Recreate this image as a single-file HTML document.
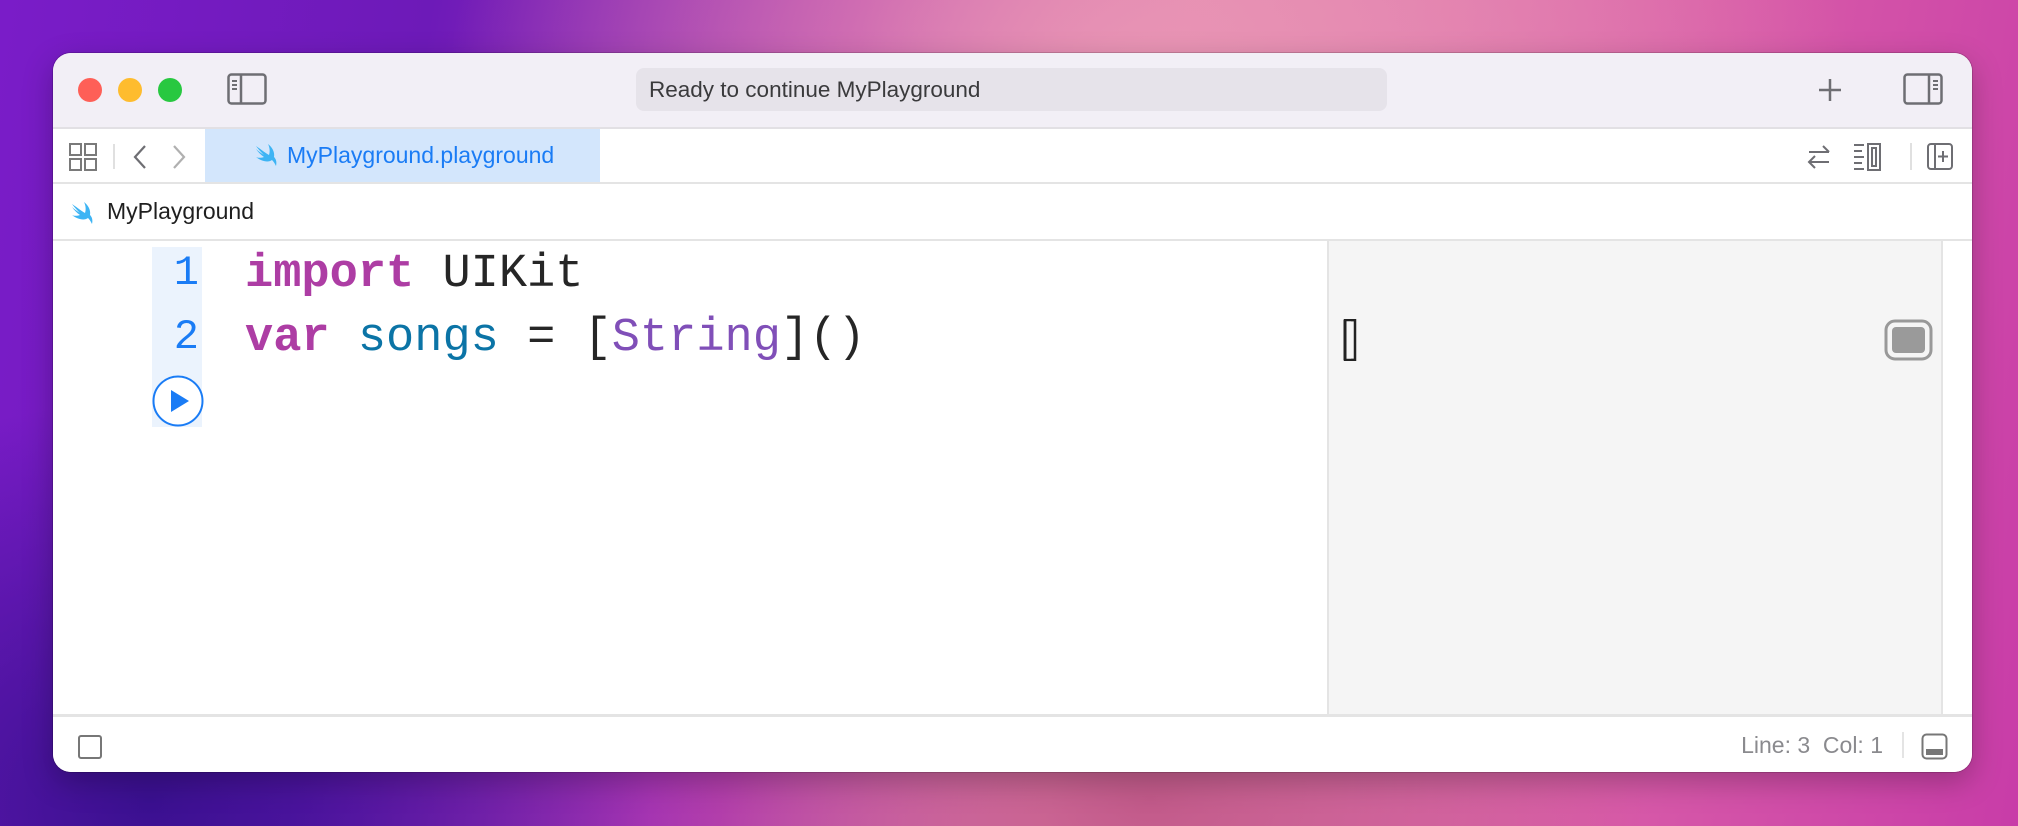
<!DOCTYPE html>
<html><head><meta charset="utf-8"><style>
*{margin:0;padding:0;box-sizing:border-box}
body{width:2018px;height:826px;overflow:hidden;position:relative;font-family:"Liberation Sans",sans-serif;
background:
radial-gradient(ellipse 700px 400px at 1150px 60px,#e894b4 0%,rgba(232,148,180,0) 100%),
radial-gradient(ellipse 500px 300px at 1150px 800px,#c25a8a 0%,rgba(194,90,138,0) 100%),
radial-gradient(ellipse 500px 400px at 150px 800px,#3a1090 0%,rgba(58,16,144,0) 100%),
linear-gradient(100deg,#7a1cc8 0%,#6d1ab8 20%,#b03ab0 40%,#e486b0 55%,#d85ca8 80%,#c83ca8 100%);}
.win{position:absolute;left:53px;top:53px;width:1919px;height:719px;border-radius:18px;overflow:hidden;background:#fff;box-shadow:0 0 0 1px rgba(0,0,0,.15),0 10px 30px rgba(0,0,0,.25)}
.title{position:absolute;left:0;top:0;width:100%;height:76px;background:#f2eff6;border-bottom:2px solid #e2e0e4}
.dot{position:absolute;top:25px;width:24px;height:24px;border-radius:50%}
.status{position:absolute;left:583px;top:15px;width:751px;height:43px;background:#e6e3ea;border-radius:8px;font-size:22.5px;color:#3a3a3c;line-height:43px;padding-left:13px}
.tabs{position:absolute;left:0;top:76px;width:100%;height:55px;background:#fff;border-bottom:2px solid #e4e4e4}
.tab{position:absolute;left:152px;top:0;width:395px;height:53px;background:#d3e6fc;color:#1a7cf5;font-size:23px;line-height:53px;padding-left:82px}
.crumb{position:absolute;left:0;top:131px;width:100%;height:57px;border-bottom:2px solid #e4e4e4;font-size:23px;color:#1f1f1f;line-height:55px;padding-left:54px}
.editor{position:absolute;left:0;top:188px;width:100%;height:473px}
.gut{position:absolute;left:99px;top:6px;width:50px;height:180px;background:#ebf3fd}
.ln{position:absolute;left:104px;width:42px;text-align:right;font-family:"Liberation Mono",monospace;font-size:42px;color:#1a7cf5}
.code{position:absolute;left:192px;font-family:"Liberation Mono",monospace;font-size:47px;color:#262626;white-space:pre}
.kw{color:#ad3da4;font-weight:bold}.id{color:#0b74a6}.ty{color:#804fb8}
.res{position:absolute;left:1274px;top:0;width:616px;height:473px;background:#f5f5f5;border-left:2px solid #e4e4e4;border-right:2px solid #e4e4e4}
.sb{position:absolute;left:0;top:661px;width:100%;height:58px;background:#fff;border-top:3px solid #e4e4e4}
</style></head><body>
<div class="win">
 <div class="title">
  <div class="dot" style="left:25px;background:#fe5f57"></div>
  <div class="dot" style="left:65px;background:#febc2e"></div>
  <div class="dot" style="left:105px;background:#28c840"></div>
  <svg style="position:absolute;left:174px;top:20px" width="40" height="32" viewBox="0 0 40 32"><rect x="1.5" y="1.5" width="37" height="29" rx="3" fill="none" stroke="#6e6e73" stroke-width="2.5"/><line x1="14" y1="2" x2="14" y2="30" stroke="#6e6e73" stroke-width="2.5"/><path d="M5 8h5M5 12h5M5 16h5" stroke="#6e6e73" stroke-width="2"/></svg>
  <div class="status">Ready to continue MyPlayground</div>
  <svg style="position:absolute;left:1764px;top:24px" width="26" height="26"><path d="M13 2v22M2 13h22" stroke="#6e6e73" stroke-width="2.5"/></svg>
  <svg style="position:absolute;left:1850px;top:20px" width="40" height="32" viewBox="0 0 40 32"><rect x="1.5" y="1.5" width="37" height="29" rx="3" fill="none" stroke="#6e6e73" stroke-width="2.5"/><line x1="26" y1="2" x2="26" y2="30" stroke="#6e6e73" stroke-width="2.5"/><path d="M30 8h5M30 12h5M30 16h5" stroke="#6e6e73" stroke-width="2"/></svg>
 </div>
 <div class="tabs">
  <svg style="position:absolute;left:16px;top:14px" width="28" height="28" viewBox="0 0 28 28" fill="none" stroke="#7a7a7a" stroke-width="2"><rect x="1" y="1" width="11" height="11"/><rect x="16" y="1" width="11" height="11"/><rect x="1" y="16" width="11" height="11"/><rect x="16" y="16" width="11" height="11"/></svg>
  <div style="position:absolute;left:60px;top:15px;width:2px;height:25px;background:#e0e0e0"></div>
  <svg style="position:absolute;left:78px;top:15px" width="18" height="26"><path d="M14 2L4 13l10 11" fill="none" stroke="#6e6e73" stroke-width="2.2"/></svg>
  <svg style="position:absolute;left:117px;top:15px" width="18" height="26"><path d="M4 2l10 11L4 24" fill="none" stroke="#b0b0b0" stroke-width="2.2"/></svg>
  <div class="tab">MyPlayground.playground</div>
  <svg style="position:absolute;left:200px;top:14px" width="26" height="24" viewBox="0 0 26 24"><path d="M3 14c5 4 12 6 16 3 2 2 3 4 4 6 1-4 0-7-2-9 1-5-2-10-6-13 2 4 2 8 1 11C11 9 6 5 3 3c3 4 6 7 8 9-3-2-6-4-8-6 2 3 5 6 8 8-3 1-6 1-8 0z" fill="#3db4f4"/></svg>
  <svg style="position:absolute;left:1752px;top:14px" width="28" height="28" fill="none" stroke="#6e6e73" stroke-width="2"><path d="M4 9h20M18 3l6 6M24 19H4M10 13l-6 6l6 6"/></svg>
  <svg style="position:absolute;left:1800px;top:14px" width="40" height="28" fill="none" stroke="#6e6e73" stroke-width="2"><path d="M1 2h10M1 8h8M1 14h10M1 20h8M1 26h10"/><rect x="15" y="1" width="12" height="26"/><rect x="19" y="5" width="4" height="18"/></svg>
  <div style="position:absolute;left:1857px;top:14px;width:2px;height:27px;background:#e0e0e0"></div>
  <svg style="position:absolute;left:1874px;top:14px" width="28" height="28" fill="none" stroke="#6e6e73" stroke-width="2"><rect x="1" y="1" width="24" height="25" rx="3"/><path d="M8 1v25M16 8v11M11 13.5h10"/></svg>
 </div>
 <div class="crumb">MyPlayground
  <svg style="position:absolute;left:16px;top:17px" width="26" height="24" viewBox="0 0 26 24"><path d="M3 14c5 4 12 6 16 3 2 2 3 4 4 6 1-4 0-7-2-9 1-5-2-10-6-13 2 4 2 8 1 11C11 9 6 5 3 3c3 4 6 7 8 9-3-2-6-4-8-6 2 3 5 6 8 8-3 1-6 1-8 0z" fill="#3db4f4"/></svg>
 </div>
 <div class="editor">
  <div class="gut"></div>
  <div class="ln" style="top:8px">1</div>
  <div class="ln" style="top:72px">2</div>
  <svg style="position:absolute;left:98px;top:133px" width="54" height="54"><circle cx="27" cy="27" r="24.5" fill="#fff" stroke="#1a7cf5" stroke-width="2"/><path d="M20 16v22l18-11z" fill="#1a7cf5"/></svg>
  <div class="code" style="top:7px"><span class="kw">import</span> UIKit</div>
  <div class="code" style="top:71px"><span class="kw">var</span> <span class="id">songs</span> = [<span class="ty">String</span>]()</div>
  <div class="res">
   <svg style="position:absolute;left:14px;top:78px" width="14" height="42"><path d="M12 1H2v40h10" fill="none" stroke="#222" stroke-width="2.5"/><path d="M2 1v40" stroke="#222" stroke-width="3"/><path d="M8 1h4v40h-4" fill="none" stroke="#222" stroke-width="2.5"/></svg>
   <svg style="position:absolute;left:555px;top:78px" width="50" height="42"><rect x="2" y="2" width="45" height="38" rx="9" fill="none" stroke="#999" stroke-width="3"/><rect x="8" y="8" width="33" height="26" rx="4" fill="#9a9a9a"/></svg>
  </div>
 </div>
 <div class="sb">
  <div style="position:absolute;left:25px;top:18px;width:24px;height:24px;border:2px solid #777;border-radius:3px"></div>
  <div style="position:absolute;right:89px;top:15px;font-size:23px;color:#8a8a8e">Line: 3&nbsp; Col: 1</div>
  <div style="position:absolute;left:1849px;top:15px;width:2px;height:26px;background:#e4e4e4"></div>
  <svg style="position:absolute;left:1868px;top:16px" width="28" height="28"><rect x="1.5" y="1.5" width="24" height="24" rx="4" fill="none" stroke="#777" stroke-width="2"/><rect x="5" y="16" width="17" height="6" fill="#777"/></svg>
 </div>
</div>
</body></html>
